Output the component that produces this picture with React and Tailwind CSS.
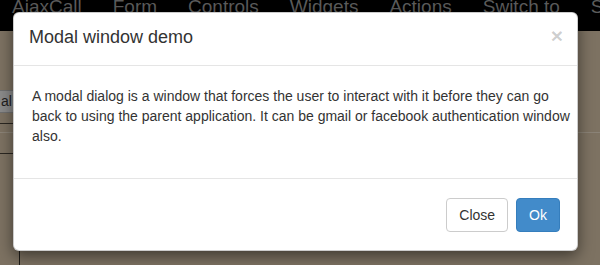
import React from "react";

const navItems = ["AjaxCall", "Form", "Controls", "Widgets", "Actions", "Switch to", "Settings"];

export default function App() {
  return (
    <div className="relative w-[600px] h-[265px] overflow-hidden bg-[#7d7262] font-['Liberation_Sans',Arial,sans-serif]">
      {/* Navbar behind the backdrop */}
      <div className="h-[31px] bg-black overflow-hidden">
        <div className="flex gap-[31px] pl-[12px] -mt-[3px] text-[19px] leading-none text-[#5c5c5c] whitespace-nowrap">
          {navItems.map((item) => (
            <span key={item}>{item}</span>
          ))}
        </div>
      </div>

      {/* Page content behind the backdrop */}
      <div className="relative">
        <div className="mt-[59px] flex">
          <div className="h-[23px] w-[60px] -ml-[40px] pl-[40px] bg-[#8a8a8a] border border-[#6f6f6f] rounded-[3px] text-[14px] leading-[21px] text-[#1e1e1e]">
            al
          </div>
        </div>
        <div className="mt-[10px] w-[20px] border-t border-[#2b2721]" />
        <div className="mt-[8px] border-t border-[#8b8377]" />
        <div className="mt-[20px] w-[20px] border-t border-[#2b2721]" />
        <div className="ml-[19px] mt-[95px] h-[20px] w-px bg-[#1f1c18]" />
      </div>

      {/* Modal */}
      <div className="absolute left-[13px] top-[12px] w-[565px] bg-white border border-black/20 rounded-[6px] shadow-[0_5px_15px_rgba(0,0,0,0.5)]">
        <div className="flex items-start justify-between pl-[15px] pr-[14px] pt-[11px] pb-[15px] border-b border-[#e5e5e5]">
          <h4 className="text-[18px] leading-[26px] text-[#333]">Modal window demo</h4>
          <span className="mt-[1px] text-[21px] leading-[21px] font-bold text-black/20">×</span>
        </div>
        <div className="pl-[18px] pr-[1px] pt-[20px] pb-[32px] text-[14px] leading-[20px] text-[#333]">
          <p>
            A modal dialog is a window that forces the user to interact with it before they can go back to using the
            parent application. It can be gmail or facebook authentication window also.
          </p>
        </div>
        <div className="flex justify-end gap-[8px] pt-[19px] pb-[18px] pr-[17px] border-t border-[#e5e5e5]">
          <button className="h-[34px] px-[12px] bg-white border border-[#ccc] rounded-[4px] text-[14px] text-[#333]">
            Close
          </button>
          <button className="h-[34px] px-[12px] bg-[#428bca] border border-[#357ebd] rounded-[4px] text-[14px] text-white">
            Ok
          </button>
        </div>
      </div>
    </div>
  );
}
